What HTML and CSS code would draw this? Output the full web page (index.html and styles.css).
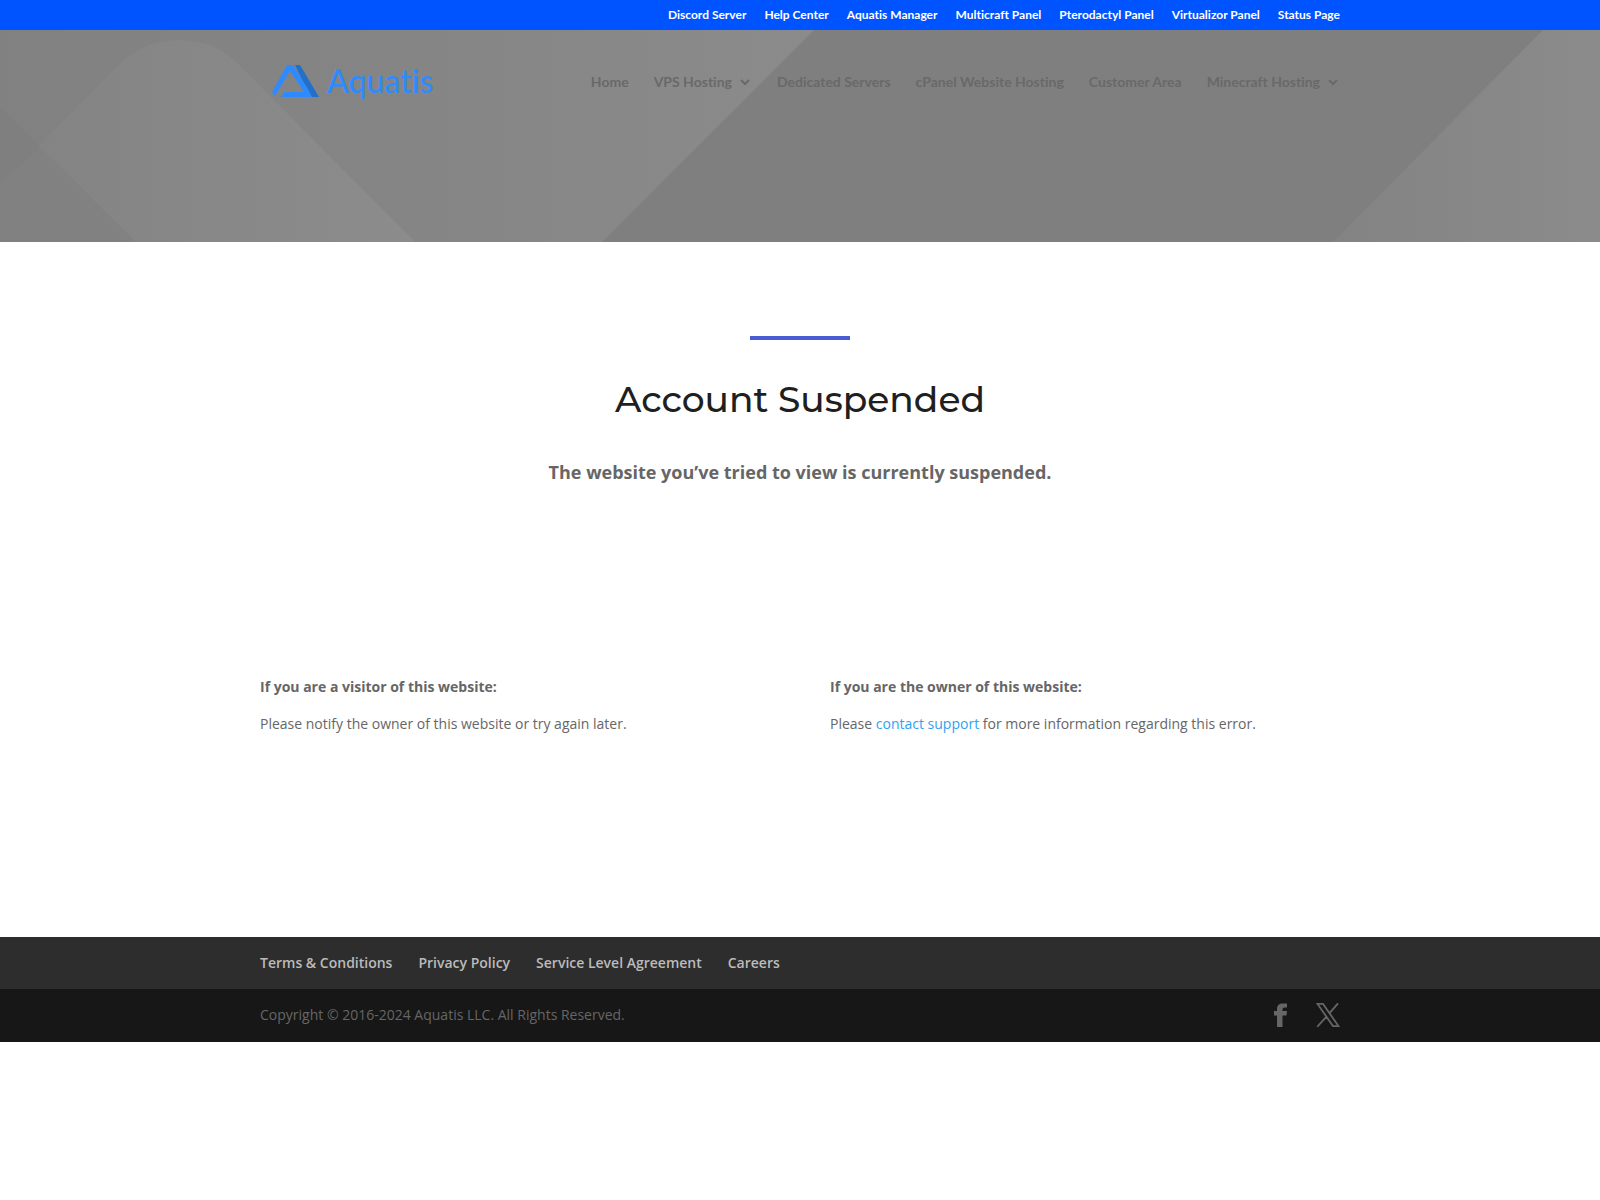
FILE: index.html
```html
<!DOCTYPE html>
<html lang="en">
<head>
<meta charset="utf-8">
<meta name="viewport" content="width=device-width, initial-scale=1">
<title>Account Suspended | Aquatis</title>
<link rel="stylesheet" href="styles.css">
</head>
<body>
<div class="topbar">
  <nav class="container topbar-nav" aria-label="Quick links">
    <a href="#">Discord Server</a>
    <a href="#">Help Center</a>
    <a href="#">Aquatis Manager</a>
    <a href="#">Multicraft Panel</a>
    <a href="#">Pterodactyl Panel</a>
    <a href="#">Virtualizor Panel</a>
    <a href="#">Status Page</a>
  </nav>
</div>
<header class="hero">
  <svg class="hero-art" viewBox="0 0 1600 212" preserveAspectRatio="none" aria-hidden="true">
    <defs>
      <linearGradient id="wide" x1="0" y1="0" x2="1" y2="0"><stop offset="0" stop-color="#818181"/><stop offset="0.5" stop-color="#858585"/><stop offset="1" stop-color="#8b8b8b"/></linearGradient>
      <linearGradient id="peak" x1="0" y1="0" x2="1" y2="0"><stop offset="0" stop-color="#838383"/><stop offset="1" stop-color="#8c8c8c"/></linearGradient>
      <linearGradient id="edge" x1="0" y1="0" x2="1" y2="0"><stop offset="0" stop-color="#838383"/><stop offset="1" stop-color="#8b8b8b"/></linearGradient>
    </defs>
    <path fill="url(#wide)" d="M0 0H814L602 212H0Z"/>
    <path fill="url(#peak)" d="M0 155L118 36Q143 10 180 10Q216 10 240 36L415 212H0Z"/>
    <path fill="#7f7f7f" d="M0 77L40 117L0 155Z"/>
    <path fill="#818181" d="M0 155L40 117L136 212H0Z"/>
    <path fill="url(#edge)" d="M1543 0H1600V212H1333Z"/>
  </svg>
  <div class="container hero-bar">
    <a class="logo" href="#">
      <svg class="logo-mark" viewBox="0 0 48 32" aria-hidden="true">
        <path fill="#266fc8" d="M23 0H28L47 32H38Z"/>
        <path fill="#2e8bff" d="M15 0H21L37 26L40 32H9L12 27H32L18 6L3 31L0 27Z"/>
      </svg>
      <span>Aquatis</span>
    </a>
    <nav class="main-nav" aria-label="Main">
      <a href="#">Home</a>
      <a href="#">VPS Hosting<svg class="chevron" viewBox="0 0 12 12" aria-hidden="true"><path d="M2 4L6 8L10 4"/></svg></a>
      <a href="#">Dedicated Servers</a>
      <a href="#">cPanel Website Hosting</a>
      <a href="#">Customer Area</a>
      <a href="#">Minecraft Hosting<svg class="chevron" viewBox="0 0 12 12" aria-hidden="true"><path d="M2 4L6 8L10 4"/></svg></a>
    </nav>
  </div>
</header>
<main class="container">
  <section class="notice">
    <hr class="rule">
    <h1>Account Suspended</h1>
    <p>The website you’ve tried to view is currently suspended.</p>
  </section>
  <section class="advice">
    <div>
      <h2>If you are a visitor of this website:</h2>
      <p>Please notify the owner of this website or try again later.</p>
    </div>
    <div>
      <h2>If you are the owner of this website:</h2>
      <p>Please <a href="#">contact support</a> for more information regarding this error.</p>
    </div>
  </section>
</main>
<footer>
  <div class="footer-links">
    <nav class="container footer-nav" aria-label="Footer">
      <a href="#">Terms &amp; Conditions</a>
      <a href="#">Privacy Policy</a>
      <a href="#">Service Level Agreement</a>
      <a href="#">Careers</a>
    </nav>
  </div>
  <div class="footer-bottom">
    <div class="container footer-row">
      <p>Copyright © 2016-2024 Aquatis LLC. All Rights Reserved.</p>
      <div class="social">
        <a href="#" aria-label="Facebook"><svg viewBox="0 0 24 24" aria-hidden="true"><path fill="currentColor" d="M19 0.5V4.5H16.5Q14.5 4.5 14.5 6.5V8H19L18.5 12.5H14.5V24H9V12.5H6V8H9V6Q9 0.5 14.5 0.5Z"/></svg></a>
        <a href="#" aria-label="X"><svg viewBox="0 0 24 24" aria-hidden="true"><path fill="none" stroke="currentColor" stroke-width="1.8" d="M1.5 0.9H7L22.5 23.1H17ZM22 0.3L13.6 10.2M10.3 13.8L1.2 23.8"/></svg></a>
      </div>
    </div>
  </div>
</footer>
</body>
</html>
```
FILE: styles.css
```css
* {
  box-sizing: border-box;
}

body {
  margin: 0;
  background: #fff;
  color: #666;
  font: 14px/24px "Open Sans", Arial, sans-serif;
}

a {
  color: inherit;
  text-decoration: none;
}

h1, h2, p {
  margin: 0;
}

svg {
  display: block;
}

.container {
  width: 100%;
  max-width: 1080px;
  margin: 0 auto;
}

.topbar {
  background: #0054ff;
  color: #fff;
  font: bold 12px/30px Lato, sans-serif;
  font-variant-ligatures: none;
}

.topbar-nav {
  display: flex;
  justify-content: flex-end;
  gap: 18px;
}

.hero {
  position: relative;
  min-height: 212px;
  background: #7f7f7f;
}

.hero-art {
  position: absolute;
  inset: 0;
  width: 100%;
  height: 100%;
}

.hero-bar {
  position: relative;
  display: flex;
  align-items: center;
  justify-content: space-between;
  padding: 30px 0 0 12px;
}

.logo {
  display: flex;
  align-items: center;
  gap: 7px;
  color: #2e8bff;
  font: 500 32px/42px Lato, sans-serif;
  font-variant-ligatures: none;
}

.logo-mark {
  width: 48px;
  height: 32px;
}

.main-nav {
  display: flex;
  gap: 25px;
  padding-top: 2px;
  color: #696969;
  font: bold 14px/24px Lato, sans-serif;
  font-variant-ligatures: none;
}

.main-nav a {
  display: flex;
  align-items: center;
}

.chevron {
  width: 12px;
  height: 12px;
  margin: 0 1px 0 7px;
  fill: none;
  stroke: currentColor;
  stroke-width: 2;
}

.notice {
  padding: 94px 0 156px;
  text-align: center;
}

.rule {
  width: 100px;
  height: 4px;
  margin: 0 auto 39px;
  border: 0;
  background: #4b5bd1;
}

.notice h1 {
  margin-bottom: 37px;
  color: #1f1f1f;
  font: 500 36px/40px Montserrat, "DejaVu Sans", sans-serif;
}

.notice p {
  font-size: 18px;
  font-weight: bold;
  line-height: 32px;
}

.advice {
  display: grid;
  grid-template-columns: 1fr 1fr;
  gap: 60px;
  padding: 31px 0 201px;
}

.advice h2 {
  margin-bottom: 13px;
  font-size: 14px;
  line-height: 24px;
}

.advice a {
  color: #2ea3f2;
}

.footer-links {
  background: #2d2d2d;
  color: #bbb;
  font-weight: 600;
}

.footer-nav {
  display: flex;
  gap: 26px;
  padding: 14px 0;
}

.footer-bottom {
  background: #171717;
}

.footer-row {
  display: flex;
  align-items: center;
  justify-content: space-between;
  padding: 14px 0 15px;
}

.social {
  display: flex;
  gap: 24px;
}

.social svg {
  width: 24px;
  height: 24px;
}
```
